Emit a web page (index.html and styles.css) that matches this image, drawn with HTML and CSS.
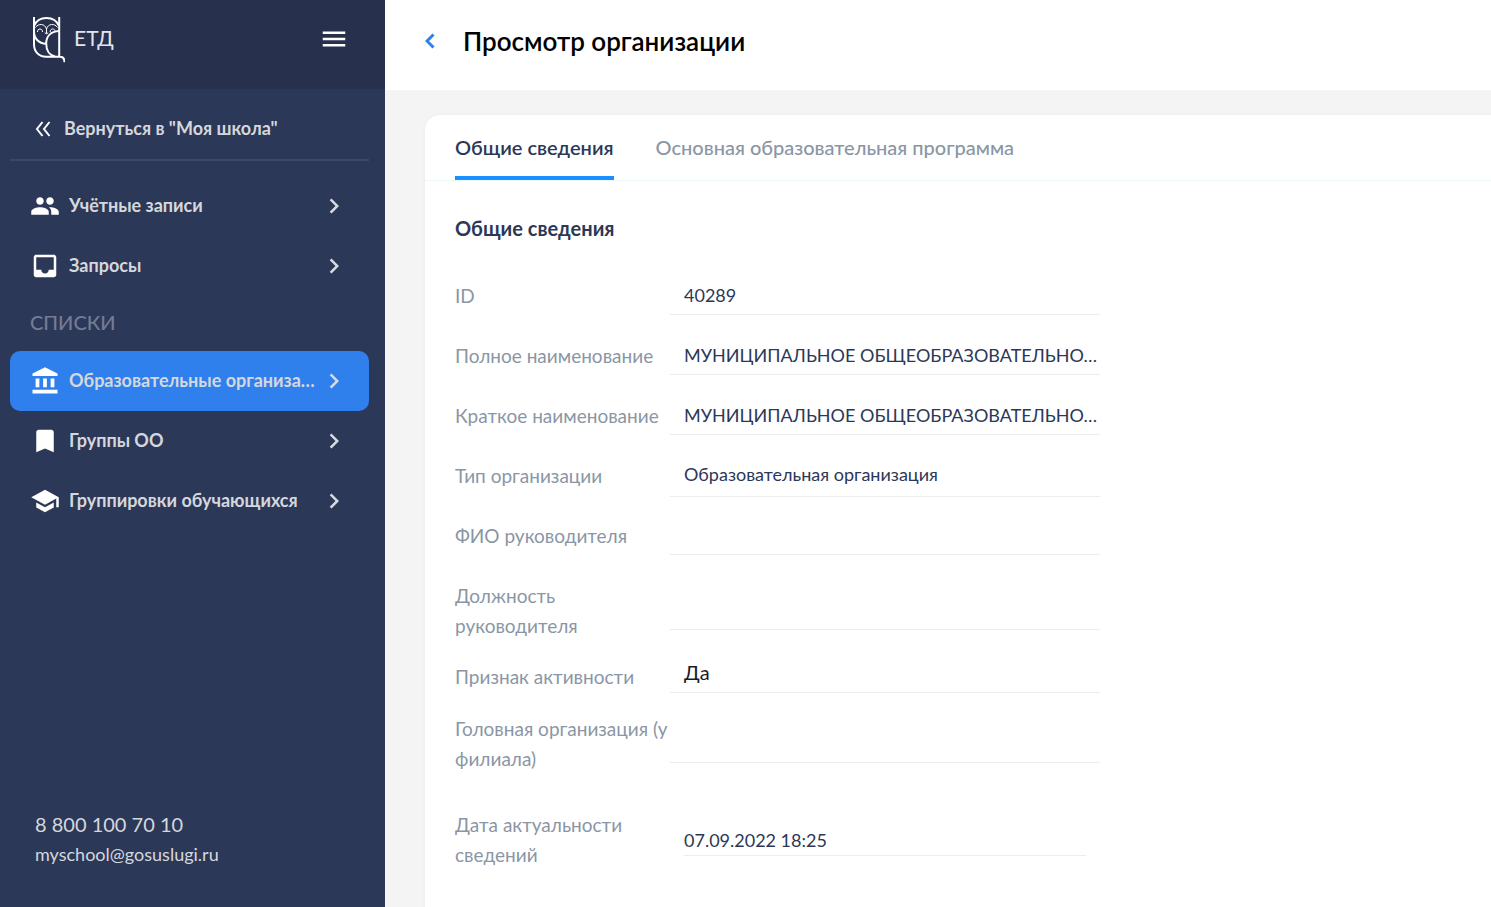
FILE: index.html
```html
<!DOCTYPE html>
<html lang="ru">
<head>
<meta charset="utf-8">
<title>Просмотр организации</title>
<link rel="stylesheet" href="styles.css">
</head>
<body>
<div class="app">
  <aside class="sidebar">
    <div class="brand">
      <a class="logo" href="#">
        <svg class="owl" viewBox="0 0 34 48" aria-hidden="true">
          <path d="M3 1v27c0 8 5 12.700 12 12.700h14c3 0 4.500 2 4.500 5.600M28.200 1v39.500"/>
          <path d="M3 10C5 5 9 2 15.500 2S26 5 28 10M3 15c0 8 5 12.500 12 12.700M28 15c-8 .5-12.800 5-12.800 12.500S19 39.500 24 40.500"/>
          <path class="fine" d="M4.500 11.500c2.500-4.200 9.500-4.300 11 1.500 1.500-5.800 8.500-5.700 11-1.500M15.500 12.500v5M13.800 16.800l1.700 1 1.700-1M6.500 16c-.3-4 5.300-4 5 0M19.200 16c-.3-4 5.300-4 5 0"/>
        </svg>
        <span>ЕТД</span>
      </a>
      <button class="icon-button" aria-label="Меню">
        <svg class="icon" viewBox="0 0 24 24"><path d="M3 18h18v-2H3v2zm0-5h18v-2H3v2zm0-7v2h18V6H3z"/></svg>
      </button>
    </div>
    <nav class="nav">
      <a class="back" href="#">
        <svg class="double" viewBox="0 0 16 16" aria-hidden="true"><path d="M7.500 1L2 8l5.500 7M14.500 1L9 8l5.500 7"/></svg>
        <span>Вернуться в "Моя школа"</span>
      </a>
      <a class="item" href="#">
        <svg class="icon" viewBox="0 0 24 24"><path d="M16 11c1.660 0 2.990-1.340 2.990-3S17.660 5 16 5c-1.660 0-3 1.340-3 3s1.340 3 3 3zm-8 0c1.660 0 2.990-1.340 2.990-3S9.660 5 8 5C6.340 5 5 6.340 5 8s1.340 3 3 3zm0 2c-2.330 0-7 1.170-7 3.500V19h14v-2.500c0-2.330-4.670-3.500-7-3.500zm8 0c-.29 0-.62.020-.97.050 1.160.84 1.970 1.970 1.970 3.450V19h6v-2.500c0-2.330-4.670-3.500-7-3.500z"/></svg>
        <span class="item-text">Учётные записи</span>
        <svg class="icon chevron" viewBox="0 0 24 24"><path d="M10 6L8.590 7.410 13.170 12l-4.580 4.590L10 18l6-6z"/></svg>
      </a>
      <a class="item" href="#">
        <svg class="icon" viewBox="0 0 24 24"><path d="M19 3H4.990c-1.110 0-1.980.89-1.980 2L3 19c0 1.100.88 2 1.990 2H19c1.100 0 2-.9 2-2V5c0-1.110-.9-2-2-2zm0 12h-4c0 1.660-1.350 3-3 3s-3-1.340-3-3H4.990V5H19v10z"/></svg>
        <span class="item-text">Запросы</span>
        <svg class="icon chevron" viewBox="0 0 24 24"><path d="M10 6L8.590 7.410 13.170 12l-4.580 4.590L10 18l6-6z"/></svg>
      </a>
      <h2 class="nav-title">СПИСКИ</h2>
      <a class="item active" href="#">
        <svg class="icon" viewBox="0 0 24 24"><path d="M4.500 10v7h3v-7h-3zm6 0v7h3v-7h-3zM2 22h20v-3H2v3zm14.500-12v7h3v-7h-3zM12 1L2 6v2h20V6L12 1z"/></svg>
        <span class="item-text">Образовательные организа…</span>
        <svg class="icon chevron" viewBox="0 0 24 24"><path d="M10 6L8.590 7.410 13.170 12l-4.580 4.590L10 18l6-6z"/></svg>
      </a>
      <a class="item" href="#">
        <svg class="icon" viewBox="0 0 24 24"><path d="M17 3H7c-1.100 0-1.990.9-1.990 2L5 21l7-3 7 3V5c0-1.100-.9-2-2-2z"/></svg>
        <span class="item-text">Группы ОО</span>
        <svg class="icon chevron" viewBox="0 0 24 24"><path d="M10 6L8.590 7.410 13.170 12l-4.580 4.590L10 18l6-6z"/></svg>
      </a>
      <a class="item" href="#">
        <svg class="icon" viewBox="0 0 24 24"><path d="M5 13.180v4L12 21l7-3.820v-4L12 17l-7-3.820zM12 3L1 9l11 6 9-4.910V17h2V9L12 3z"/></svg>
        <span class="item-text">Группировки обучающихся</span>
        <svg class="icon chevron" viewBox="0 0 24 24"><path d="M10 6L8.590 7.410 13.170 12l-4.580 4.590L10 18l6-6z"/></svg>
      </a>
    </nav>
    <footer class="contacts">
      <a class="phone" href="tel:88001007010">8 800 100 70 10</a>
      <a class="mail" href="mailto:myschool@gosuslugi.ru">myschool@gosuslugi.ru</a>
    </footer>
  </aside>
  <main class="main">
    <header class="topbar">
      <button class="icon-button go-back" aria-label="Назад">
        <svg viewBox="0 0 10 16" aria-hidden="true"><path d="M8.500 1.500L2 8l6.500 6.500"/></svg>
      </button>
      <h1>Просмотр организации</h1>
    </header>
    <section class="card">
      <div class="tabs" role="tablist">
        <button class="tab selected" role="tab" aria-selected="true">Общие сведения</button>
        <button class="tab" role="tab" aria-selected="false">Основная образовательная программа</button>
      </div>
      <div class="content">
        <h2>Общие сведения</h2>
        <dl class="fields">
          <div class="field"><dt>ID</dt><dd>40289</dd></div>
          <div class="field"><dt>Полное наименование</dt><dd>МУНИЦИПАЛЬНОЕ ОБЩЕОБРАЗОВАТЕЛЬНО…</dd></div>
          <div class="field"><dt>Краткое наименование</dt><dd>МУНИЦИПАЛЬНОЕ ОБЩЕОБРАЗОВАТЕЛЬНО…</dd></div>
          <div class="field type"><dt>Тип организации</dt><dd>Образовательная организация</dd></div>
          <div class="field"><dt>ФИО руководителя</dt><dd></dd></div>
          <div class="field compact tall"><dt>Должность руководителя</dt><dd></dd></div>
          <div class="field compact flag"><dt>Признак активности</dt><dd>Да</dd></div>
          <div class="field compact tall"><dt>Головная организация (у филиала)</dt><dd></dd></div>
          <div class="field date"><dt>Дата актуальности сведений</dt><dd>07.09.2022 18:25</dd></div>
        </dl>
      </div>
    </section>
  </main>
</div>
</body>
</html>
```
FILE: styles.css
```css
* { box-sizing: border-box; }
body { margin: 0; font-family: Lato, "Liberation Sans", sans-serif; font-size: 20px; line-height: 30px; color: #2c3857; }
h1, h2, dl, dd { margin: 0; }
a { color: inherit; text-decoration: none; }
button { padding: 0; border: 0; background: none; font: inherit; color: inherit; cursor: pointer; }
svg { display: block; flex: none; }

.app { display: flex; min-height: 100vh; background: #f4f4f4; }

.sidebar { display: flex; flex-direction: column; flex: none; width: 385px; background: #2c3857; color: #d5d7dd; }
.brand { display: flex; justify-content: space-between; align-items: flex-start; height: 89px; padding: 16px 36px 0 31px; background: #27314e; }
.logo { display: flex; gap: 9px; font-size: 21px; line-height: 44px; color: #e4e5ec; }
.owl { width: 34px; height: 48px; fill: none; stroke: #fff; stroke-width: 2; }
.owl .fine { stroke-width: 1; }
.icon { width: 30px; height: 30px; fill: #fff; }
.brand .icon-button { padding-top: 8px; }

.nav { display: flex; flex-direction: column; padding: 10px 16px 0 10px; font-weight: 700; font-size: 18px; }
.back { display: flex; align-items: center; gap: 13px; height: 62px; margin-bottom: 15px; padding-left: 25px; border-bottom: 2px solid #3b4866; }
.back span, .item-text { padding-bottom: 2px; }
.double { width: 16px; height: 16px; fill: none; stroke: #fff; stroke-width: 2; }
.item { display: flex; align-items: center; height: 60px; padding: 0 20px; border-radius: 10px; }
.item-text { flex: 1; min-width: 0; margin-left: 9px; overflow: hidden; text-overflow: ellipsis; white-space: nowrap; }
.chevron { fill: #d9dbe2; }
.active { background: #2f80ed; }
.nav-title { height: 55px; padding: 11px 20px 0; font-size: 20px; font-weight: 500; color: #747b96; }
.contacts { display: flex; flex-direction: column; margin-top: auto; padding: 0 35px 41px; }
.mail { font-size: 18px; }

.main { display: flex; flex-direction: column; flex: 1; min-width: 0; }
.topbar { display: flex; align-items: center; gap: 28px; height: 90px; padding: 0 40px 9px; background: #fff; }
.go-back svg { width: 10px; height: 16px; fill: none; stroke: #2f80ed; stroke-width: 3; }
h1 { font-size: 26px; line-height: 36px; font-weight: 600; color: #000; }

.card { flex: 1; margin: 25px 0 0 40px; background: #fff; border-radius: 15px 0 0 0; box-shadow: 0 0 4px #ececec; }
.tabs { display: flex; gap: 42px; height: 66px; padding: 0 30px; border-bottom: 1px solid #e9faf3; }
.tab { height: 65px; padding-top: 2px; border-bottom: 4px solid transparent; color: #8a96a5; font-weight: 500; }
.selected { border-color: #1890ff; color: #2c3857; font-weight: 600; }
.content { padding: 32px 30px 20px; }
.content h2 { font-size: 20px; font-weight: 700; }

.fields { max-width: 645px; padding-top: 32px; }
.field { display: grid; grid-template-columns: 215px minmax(0, 1fr); align-items: start; margin-bottom: 20px; }
dt { padding-top: 6px; font-size: 19px; color: #8a96a5; }
dd { min-height: 40px; padding: 1px 0 0 14px; border-bottom: 1px solid #eaedf1; font-size: 18px; line-height: 38px; white-space: nowrap; }
.type { margin-bottom: 18px; }
.type dd { padding: 0 0 3px 14px; }
.compact { margin-bottom: 15px; }
.tall dd { min-height: 55px; }
.flag dd { min-height: 37px; padding: 0 0 4px 14px; font-size: 20px; line-height: 32px; color: #1c1c1c; }
.tall:has(+ .date) { margin-bottom: 30px; }
.date dd { margin: 0 14px; padding: 21px 0 0; line-height: 30px; }
```
